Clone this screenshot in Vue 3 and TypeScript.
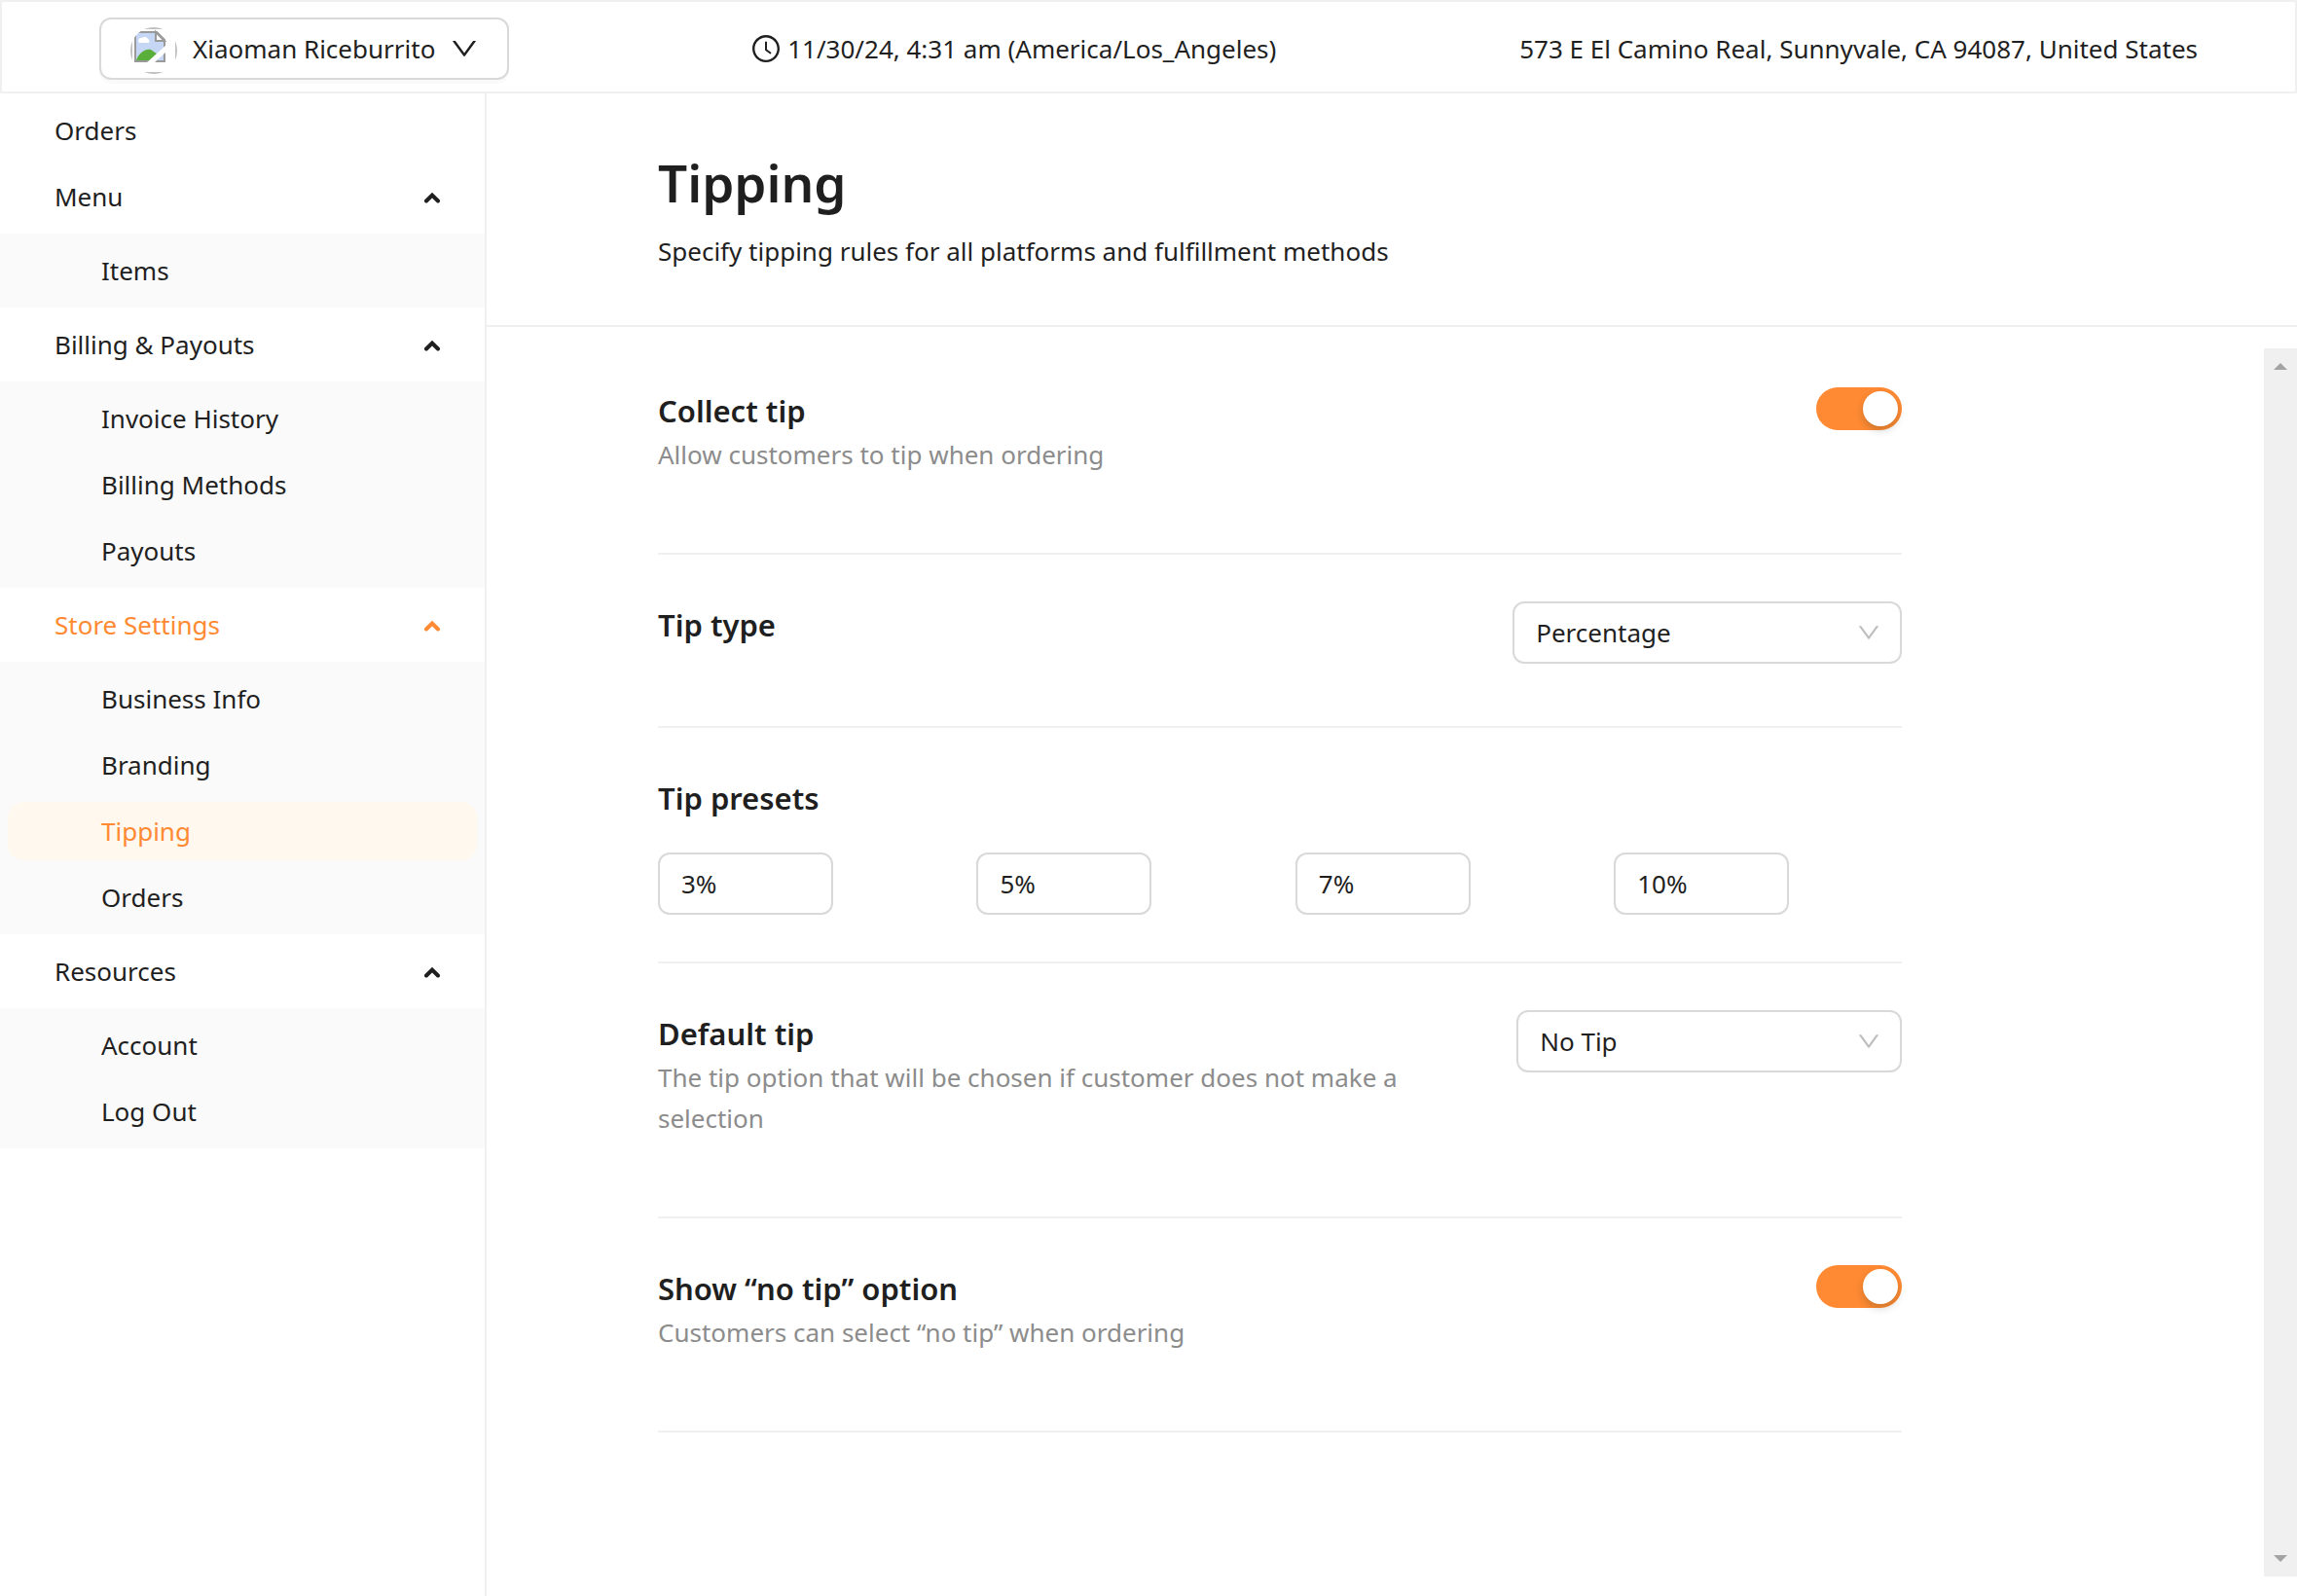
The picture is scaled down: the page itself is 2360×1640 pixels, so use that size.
<script setup lang="ts">
import { reactive, ref } from 'vue'

interface NavGroup {
  label: string
  open: boolean
  items: string[]
}

const activeGroup = 'Store Settings'
const activeItem = 'Tipping'

const groups = reactive<NavGroup[]>([
  { label: 'Menu', open: true, items: ['Items'] },
  { label: 'Billing & Payouts', open: true, items: ['Invoice History', 'Billing Methods', 'Payouts'] },
  { label: 'Store Settings', open: true, items: ['Business Info', 'Branding', 'Tipping', 'Orders'] },
  { label: 'Resources', open: true, items: ['Account', 'Log Out'] },
])

const collectTip = ref(true)
const showNoTip = ref(true)
const tipType = ref('Percentage')
const defaultTip = ref('No Tip')
const presets = ref(['3%', '5%', '7%', '10%'])

const downPath =
  'M884 256h-75c-5.1 0-9.9 2.5-12.9 6.6L512 654.2 227.9 262.6c-3-4.1-7.8-6.6-12.9-6.6h-75c-6.5 0-10.3 7.4-6.5 12.7l352.6 486.1c12.8 17.6 39 17.6 51.7 0l352.6-486.1c3.9-5.3.1-12.7-6.4-12.7z'
</script>

<template>
  <div class="page">
    <header class="topbar">
      <button type="button" class="store">
        <svg class="avatar" viewBox="0 -4 48 52" aria-hidden="true">
          <clipPath id="avatar-clip"><circle cx="24" cy="24" r="24" /></clipPath>
          <g clip-path="url(#avatar-clip)">
            <path d="M1 1H47V47H1Z" fill="none" stroke="#c0c0c0" stroke-width="2" />
            <path d="M5 5H27L35 13V35H5Z" fill="#c6d6f5" stroke="#9a9a9a" stroke-width="2" />
            <path d="M9 16a3 3 0 0 1 3-5 4 4 0 0 1 6 1 3 3 0 0 1 1 4Z" fill="#fff" />
            <path d="M6 34c3-8 9-12 15-11l7 5V34Z" fill="#5aae3a" />
            <path d="M26 5V14H35Z" fill="#fff" stroke="#9a9a9a" stroke-width="2" />
            <path d="M16 37L37 18V25L24 37Z" fill="#fff" />
          </g>
        </svg>
        <span>Xiaoman Riceburrito</span>
        <svg class="icon" viewBox="64 64 896 896" aria-hidden="true"><path :d="downPath" /></svg>
      </button>
      <div class="clock">
        <svg class="icon" viewBox="64 64 896 896" aria-hidden="true">
          <path d="M512 64C264.600 64 64 264.600 64 512s200.600 448 448 448 448-200.600 448-448S759.400 64 512 64zm0 820c-205.400 0-372-166.600-372-372s166.600-372 372-372 372 166.600 372 372-166.600 372-372 372z" />
          <path d="M686.700 638.600L544.100 535.500V288c0-4.400-3.600-8-8-8H488c-4.400 0-8 3.600-8 8v275.400c0 2.600 1.200 5 3.300 6.500l165.400 120.600c3.600 2.600 8.600 1.900 11.200-1.700l28.600-39c2.600-3.700 1.800-8.700-1.800-11.200z" />
        </svg>
        <span>11/30/24, 4:31 am (America/Los_Angeles)</span>
      </div>
      <span>573 E El Camino Real, Sunnyvale, CA 94087, United States</span>
    </header>

    <div class="body">
      <nav class="sidebar">
        <div class="row">
          <a href="#orders" class="entry">Orders</a>
        </div>
        <template v-for="group in groups" :key="group.label">
          <div class="row">
            <button
              type="button"
              class="entry"
              :class="{ current: group.label === activeGroup }"
              :aria-expanded="group.open"
              @click="group.open = !group.open"
            >
              <span>{{ group.label }}</span>
              <svg class="arrow" :class="{ closed: !group.open }" viewBox="0 0 20 14" aria-hidden="true">
                <path d="M4 11.500L10 5.500L16 11.500" />
              </svg>
            </button>
          </div>
          <div v-if="group.open" class="submenu">
            <a
              v-for="item in group.items"
              :key="item"
              href="#"
              class="entry sub"
              :class="{ current: item === activeItem, selected: item === activeItem }"
              >{{ item }}</a
            >
          </div>
        </template>
      </nav>

      <main class="main">
        <div class="heading">
          <h1>Tipping</h1>
          <p>Specify tipping rules for all platforms and fulfillment methods</p>
        </div>

        <div class="scroller">
          <div class="content">
            <div class="settings">
              <section class="setting first">
                <div class="info">
                  <h2><label for="collect-tip">Collect tip</label></h2>
                  <p>Allow customers to tip when ordering</p>
                </div>
                <input id="collect-tip" v-model="collectTip" type="checkbox" role="switch" class="switch" />
              </section>

              <section class="setting">
                <div class="info">
                  <h2><label for="tip-type">Tip type</label></h2>
                </div>
                <div class="picker wide">
                  <select id="tip-type" v-model="tipType">
                    <option>Percentage</option>
                    <option>Fixed amount</option>
                  </select>
                  <svg viewBox="64 64 896 896" aria-hidden="true"><path :d="downPath" /></svg>
                </div>
              </section>

              <section class="setting stacked">
                <h2>Tip presets</h2>
                <div class="presets">
                  <input
                    v-for="(_, i) in presets"
                    :key="i"
                    v-model="presets[i]"
                    type="text"
                    :aria-label="`Tip preset ${i + 1}`"
                  />
                </div>
              </section>

              <section class="setting">
                <div class="info">
                  <h2><label for="default-tip">Default tip</label></h2>
                  <p>The tip option that will be chosen if customer does not make a selection</p>
                </div>
                <div class="picker">
                  <select id="default-tip" v-model="defaultTip">
                    <option>No Tip</option>
                    <option v-for="preset in presets" :key="preset">{{ preset }}</option>
                  </select>
                  <svg viewBox="64 64 896 896" aria-hidden="true"><path :d="downPath" /></svg>
                </div>
              </section>

              <section class="setting">
                <div class="info">
                  <h2><label for="show-no-tip">Show “no tip” option</label></h2>
                  <p>Customers can select “no tip” when ordering</p>
                </div>
                <input id="show-no-tip" v-model="showNoTip" type="checkbox" role="switch" class="switch" />
              </section>
            </div>
          </div>

          <div class="scrollbar" aria-hidden="true">
            <svg viewBox="0 0 14 7"><path d="M0 7L7 0L14 7Z" /></svg>
            <svg viewBox="0 0 14 7"><path d="M0 0L7 7L14 0Z" /></svg>
          </div>
        </div>
      </main>
    </div>
  </div>
</template>

<style>
body {
  margin: 0;
  background: #fff;
}
</style>

<style scoped>
.page {
  display: flex;
  flex-direction: column;
  min-height: 100vh;
  font-family: 'Segoe UI', 'Noto Sans', sans-serif;
  font-size: 26px;
  line-height: 44px;
  color: #1f1f1f;
}
.page *,
.page *::before {
  box-sizing: border-box;
}
h1,
h2,
p {
  margin: 0;
  font-weight: 600;
}
p {
  font-weight: 400;
}
button,
input,
select {
  margin: 0;
  font: inherit;
  color: inherit;
}

/* Top bar */
.topbar {
  display: flex;
  align-items: center;
  justify-content: space-between;
  height: 96px;
  padding: 4px 100px 0;
  border: 2px solid #f0f0f0;
  white-space: nowrap;
}
.store {
  display: flex;
  align-items: center;
  gap: 16px;
  height: 64px;
  padding: 0 30px;
  border: 2px solid #d9d9d9;
  border-radius: 12px;
  background: #fff;
  box-shadow: 0 4px 0 rgba(0, 0, 0, 0.02);
  cursor: pointer;
}
.avatar {
  width: 48px;
  height: 52px;
}
.icon {
  width: 28px;
  height: 28px;
  fill: currentColor;
}
.clock {
  display: flex;
  align-items: center;
  gap: 8px;
}

/* Sidebar */
.body {
  display: flex;
  flex: 1;
}
.sidebar {
  flex: 0 0 500px;
  border-right: 2px solid #f0f0f0;
}
.row,
.submenu {
  display: flex;
  flex-direction: column;
  gap: 8px;
  padding: 8px;
}
.row + .row {
  padding-top: 0;
}
.submenu {
  background: #fafafa;
}
.entry {
  display: flex;
  align-items: center;
  justify-content: space-between;
  height: 60px;
  padding: 0 36px 0 48px;
  border: 0;
  border-radius: 16px;
  background: transparent;
  text-align: left;
  text-decoration: none;
  color: inherit;
  cursor: pointer;
}
.entry.sub {
  padding-left: 96px;
}
.entry.current {
  color: #ff8a33;
}
.entry.selected {
  background: #fff8ee;
}
.arrow {
  width: 20px;
  height: 14px;
  fill: none;
  stroke: currentColor;
  stroke-width: 4;
  stroke-linecap: round;
}
.arrow.closed {
  transform: rotate(180deg);
}

/* Main column */
.main {
  display: flex;
  flex: 1;
  flex-direction: column;
  min-width: 0;
}
.heading {
  padding: 56px 176px 54px;
  border-bottom: 2px solid #f0f0f0;
}
h1 {
  margin-bottom: 12px;
  font-size: 53px;
  line-height: 72px;
}
.scroller {
  display: flex;
  flex: 1;
  margin: 22px 0 20px;
}
.content {
  flex: 1;
  padding-left: 176px;
}
.settings {
  width: calc((100% + 176px) * 0.7);
}
.scrollbar {
  display: flex;
  flex-direction: column;
  align-items: center;
  justify-content: space-between;
  width: 34px;
  padding: 15px 0;
  background: #f0f0f0;
}
.scrollbar svg {
  width: 14px;
  height: 7px;
  fill: #a3a3a3;
}

/* Settings */
.setting {
  display: flex;
  align-items: flex-start;
  justify-content: space-between;
  padding: 48px 0 80px;
  border-bottom: 2px solid #f0f0f0;
}
.setting.first {
  padding-top: 40px;
}
.setting.stacked {
  flex-direction: column;
  align-items: stretch;
  gap: 32px;
  padding-bottom: 48px;
}
.info {
  flex: 0 1 800px;
}
h2 {
  font-size: 31px;
  line-height: 48px;
}
.info p {
  line-height: 42px;
  color: #8c8c8c;
}
.presets {
  display: flex;
  justify-content: space-between;
  padding-right: 116px;
}
.presets input,
select {
  height: 64px;
  padding: 0 22px;
  border: 2px solid #d9d9d9;
  border-radius: 12px;
  background: #fff;
}
.presets input {
  width: 180px;
}
.picker {
  position: relative;
  width: 396px;
  height: 64px;
  margin-bottom: -16px;
}
.picker.wide {
  width: 400px;
}
select {
  width: 100%;
  appearance: none;
}
.picker svg {
  position: absolute;
  top: 20px;
  right: 22px;
  width: 24px;
  height: 24px;
  fill: #bfbfbf;
  pointer-events: none;
}
.switch {
  display: flex;
  width: 88px;
  height: 44px;
  padding: 4px;
  border-radius: 22px;
  background: #bfbfbf;
  appearance: none;
  cursor: pointer;
}
.switch::before {
  content: '';
  width: 36px;
  height: 36px;
  border-radius: 18px;
  background: #fff;
  box-shadow: 0 4px 8px rgba(0, 35, 11, 0.2);
}
.switch:checked {
  justify-content: flex-end;
  background: #ff8a33;
}
</style>
